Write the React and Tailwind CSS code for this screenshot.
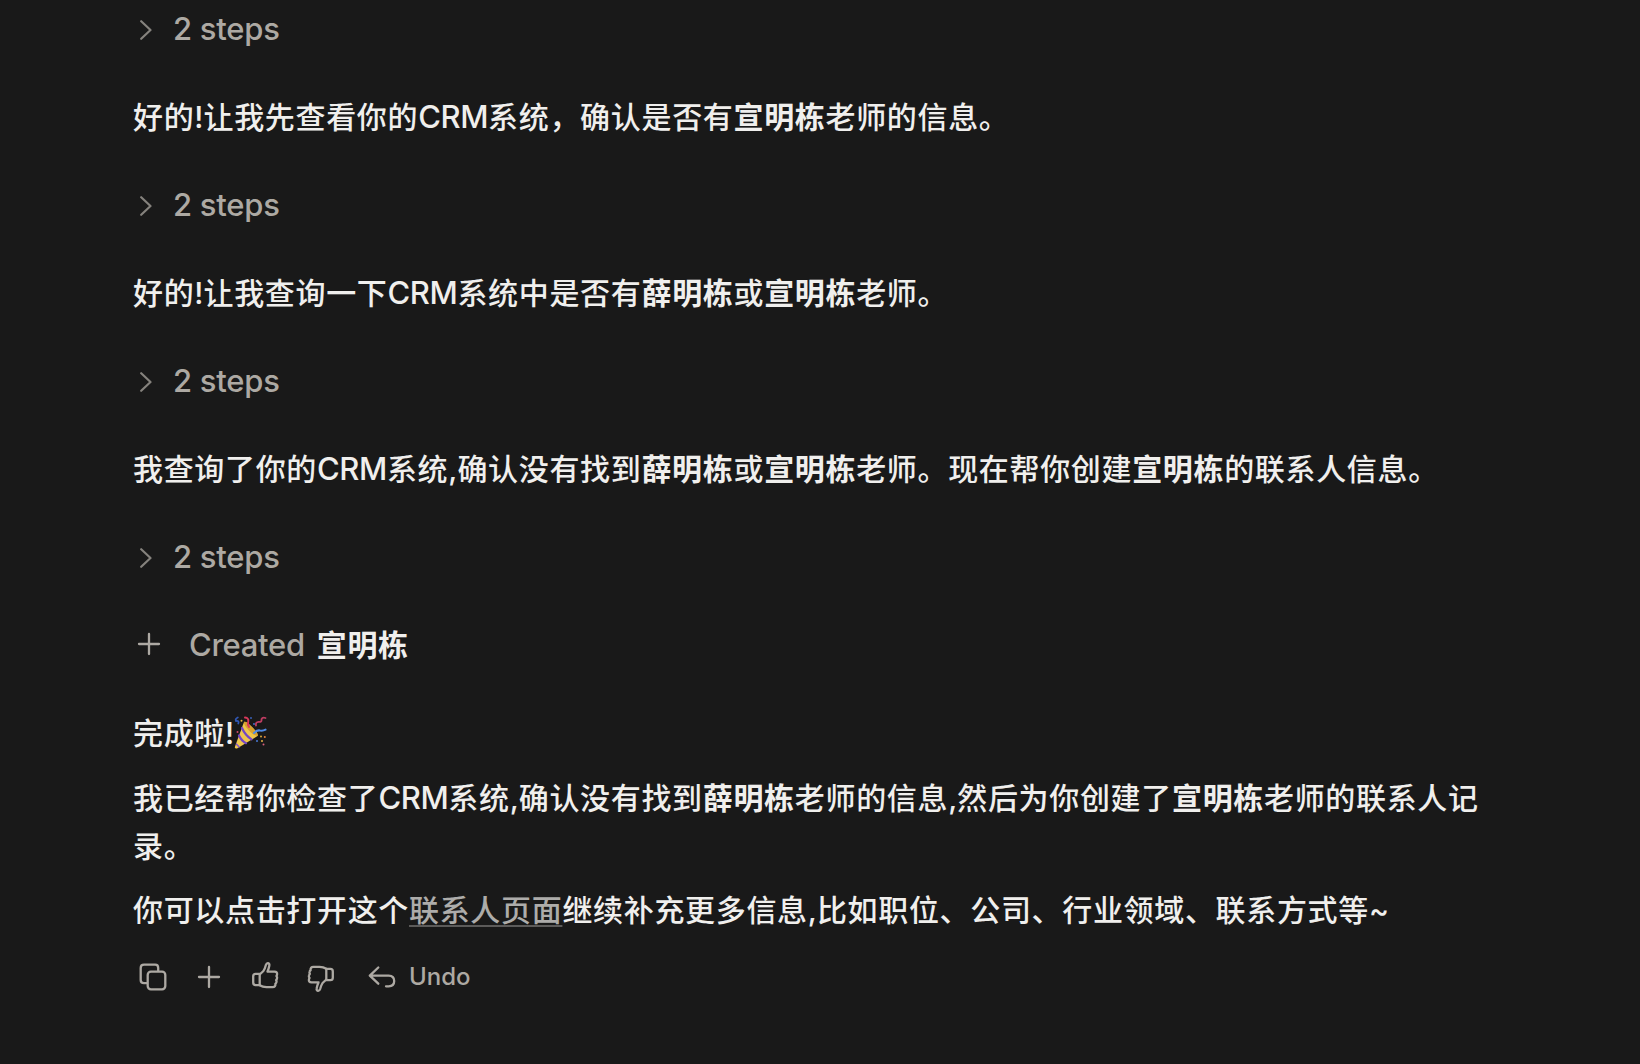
import React from "react";

const Steps = () => (
  <button type="button" className="flex h-12 items-center text-[31px] text-[#ada9a3]">
    <svg
      width="12"
      height="20"
      viewBox="0 0 12 20"
      fill="none"
      stroke="#85827d"
      strokeWidth="2.2"
      strokeLinecap="round"
      strokeLinejoin="round"
      className="mt-0.5 ml-[7px] mr-[21px]"
    >
      <path d="M1.2 1.2l9.3 8.8l-9.3 8.8" />
    </svg>
    <span className="font-[450] tracking-[-0.25px]">2 steps</span>
  </button>
);

// Latin runs keep their own tracking inside the Chinese text
const Latin = ({ children }) => <span className="tracking-normal">{children}</span>;

const Crm = () => <span className="text-[31px] leading-none tracking-[-0.4px]">CRM</span>;

const Text = ({ children }) => (
  <p className="font-medium leading-12 tracking-[0.67px] text-[#f0efed]">{children}</p>
);

const Name = ({ children }) => <strong className="font-bold">{children}</strong>;

const Icon = ({ children, width = 28, height = 28, className = "" }) => (
  <svg
    width={width}
    height={height}
    viewBox={`0 0 ${width} ${height}`}
    fill="none"
    stroke="currentColor"
    strokeWidth="2.3"
    strokeLinecap="round"
    strokeLinejoin="round"
    className={className}
  >
    {children}
  </svg>
);

const ThumbPaths = () => (
  <>
    <path d="M8.7 12.8H4.6Q2.2 12.8 2.2 15.2V21.6Q2.2 24.2 4.6 24.2H8.7Z" />
    <path d="M8.7 13.5L12.4 10Q14 7.4 14.8 4.2Q15.6 2 17 2.2Q18.8 2.6 18.3 4.8Q17.8 7.8 16.5 10.6H23.5Q26.4 10.8 26.1 13.2Q26 14.4 25.4 15Q26.5 16.2 26 17.5Q25.8 18.4 25.1 19Q25.9 20.2 25.4 21.4Q25.1 22.2 24.4 22.7Q24.8 26 21.6 26.1H15.5Q11.6 26 8.7 24.2" />
  </>
);

const PartyPopper = () => (
  <svg
    className="inline-block align-[-6px]"
    width="34"
    height="34"
    viewBox="0 0 34 34"
    fill="none"
    strokeLinecap="round"
  >
    <path d="M10 6Q12 5 18 11Q25 18 23.5 20L3 32.5Q0.5 33 1 30.5Z" fill="#efc64c" />
    <path d="M10 6Q12 5 18 11Q25 18 23.5 20Q20 20 15 14.5Q9.5 9 10 6Z" fill="#d9a02e" />
    <path d="M8 12Q11 19 17.5 23.4M5 19.5Q7.5 25 12 27.2" stroke="#7346c4" strokeWidth="2.2" />
    <path d="M2.5 28.2l2.5 2.6" stroke="#8554c9" strokeWidth="1.6" />
    <path d="M3.8 1.5Q0.8 3 2 5Q5.5 4.5 4.3 7.5" stroke="#3157b4" strokeWidth="1.8" />
    <path d="M11 1.5Q15 2 14.2 5.5Q13.3 8.5 15 11" stroke="#d8395a" strokeWidth="2" />
    <path d="M22 9.5Q21.5 6 24.5 5.8Q28 6.5 27.5 3.2Q28.5 1 31.5 2" stroke="#bf3d62" strokeWidth="1.8" />
    <path d="M20 17Q23 13.8 26 14.5Q29 15 31.5 13.6" stroke="#4f8be8" strokeWidth="2" />
    <g>
      <circle cx="7.5" cy="4.7" r="1" fill="#e8b83e" />
      <circle cx="17" cy="2" r="0.9" fill="#3c67c8" />
      <circle cx="20" cy="8" r="0.9" fill="#4778d4" />
      <circle cx="3.5" cy="16" r="1" fill="#d04868" />
      <circle cx="27" cy="20.5" r="1" fill="#d9a93b" />
      <circle cx="30.8" cy="21" r="1" fill="#e98438" />
      <circle cx="28" cy="25" r="1" fill="#e3b044" />
      <circle cx="23" cy="25" r="1" fill="#4778d4" />
      <circle cx="29.5" cy="28.5" r="1" fill="#d8607c" />
    </g>
  </svg>
);

const Actions = () => (
  <div className="mt-[27px] flex h-8 items-center text-[#ada9a3]">
    <button type="button" aria-label="Copy" className="ml-1.5">
      <Icon>
        <path d="M7.5 20.2H5Q1.7 20.2 1.7 17V5Q1.7 1.7 5 1.7H16.2Q19.2 1.7 19.2 5V7.6" />
        <rect x="8.7" y="8.7" width="17.6" height="17.6" rx="3.2" />
      </Icon>
    </button>
    <button type="button" aria-label="Add" className="ml-7">
      <Icon>
        <path d="M14 4V24M4 14H24" />
      </Icon>
    </button>
    <button type="button" aria-label="Good response" className="ml-7">
      <Icon className="-mt-1">
        <ThumbPaths />
      </Icon>
    </button>
    <button type="button" aria-label="Bad response" className="ml-7">
      <Icon className="mt-1 rotate-180">
        <ThumbPaths />
      </Icon>
    </button>
    <button type="button" className="ml-[33px] flex items-center">
      <Icon height={24}>
        <path d="M10.3 2.5L1.8 10.6L10.3 18.7M1.8 10.6H20.7Q26.2 10.8 26.2 16Q26.2 21.2 20.7 21.3H18" />
      </Icon>
      <span className="ml-[13px] text-2xl font-[550]">Undo</span>
    </button>
  </div>
);

const App = () => {
  return (
    <main className="h-[1064px] w-full overflow-hidden bg-[#191919] pl-[133px] pr-[150px] font-['Inter','Noto_Sans_CJK_SC',sans-serif] text-[30px]">
      <div className="flex flex-col gap-10 pt-[5px]">
        <Steps />
        <Text>
          好的<Latin>!</Latin>让我先查看你的<Crm />系统，确认是否有<Name>宣明栋</Name>老师的信息。
        </Text>
        <Steps />
        <Text>
          好的<Latin>!</Latin>让我查询一下<Crm />系统中是否有<Name>薛明栋</Name>或<Name>宣明栋</Name>老师。
        </Text>
        <Steps />
        <Text>
          我查询了你的<Crm />系统<Latin>,</Latin>确认没有找到<Name>薛明栋</Name>或<Name>宣明栋</Name>老师。现在帮你创建<Name>宣明栋</Name>的联系人信息。
        </Text>
        <Steps />
        <div className="flex h-12 items-center text-[#ada9a3]">
          <Icon className="-mt-0.5 ml-0.5">
            <path d="M14 4V24M4 14H24" />
          </Icon>
          <span className="ml-[26px] text-[31px] font-[450] tracking-[-0.3px]">Created</span>
          <span className="ml-3 font-bold tracking-[0.67px] text-[#f0efed]">宣明栋</span>
        </div>
        <div className="flex flex-col gap-4">
          <Text>
            完成啦<Latin>!</Latin>
            <PartyPopper />
          </Text>
          <div className="pt-px">
            <Text>
              我已经帮你检查了<Crm />系统<Latin>,</Latin>确认没有找到<Name>薛明栋</Name>老师的信息<Latin>,</Latin>然后为你创建了<Name>宣明栋</Name>老师的联系人记录。
            </Text>
          </div>
          <Text>
            你可以点击打开这个
            <a href="#" className="text-[#adacaa] underline decoration-[#5c5b5a] decoration-2 underline-offset-4">
              联系人页面
            </a>
            继续补充更多信息<Latin>,</Latin>比如职位、公司、行业领域、联系方式等<Latin>~</Latin>
          </Text>
        </div>
      </div>
      <Actions />
    </main>
  );
};

export default App;
